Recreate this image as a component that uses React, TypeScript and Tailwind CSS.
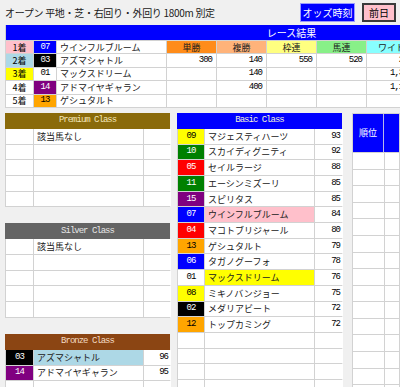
import React from "react";

const jp = "font-['Noto_Sans_CJK_JP',sans-serif]";
const mono = "font-['Liberation_Mono','Noto_Sans_CJK_JP',monospace] tracking-[-1px]";

const frame: Record<string, string> = {
    "01": "bg-white text-black",
    "02": "bg-black text-white",
    "03": "bg-black text-white",
    "04": "bg-[#ff0000] text-white",
    "05": "bg-[#ff0000] text-white",
    "06": "bg-[#0000ff] text-white",
    "07": "bg-[#0000ff] text-white",
    "08": "bg-[#ffff00] text-black",
    "09": "bg-[#ffff00] text-black",
    "10": "bg-[#008000] text-white",
    "11": "bg-[#008000] text-white",
    "12": "bg-[#ffa500] text-black",
    "13": "bg-[#ffa500] text-black",
    "14": "bg-[#800080] text-white",
    "15": "bg-[#800080] text-white",
};

const results = [
    { rank: "1着", rankBg: "bg-[#ffc0cb]", no: "07", name: "ウインフルブルーム" },
    { rank: "2着", rankBg: "bg-[#add8e6]", no: "03", name: "アズマシャトル" },
    { rank: "3着", rankBg: "bg-[#ffff00]", no: "01", name: "マックスドリーム" },
    { rank: "4着", rankBg: "bg-white", no: "14", name: "アドマイヤギャラン" },
    { rank: "5着", rankBg: "bg-white", no: "13", name: "ゲシュタルト" },
];

const payHeads = [
    { label: "単勝", bg: "bg-[#ff8c1a]" },
    { label: "複勝", bg: "bg-[#ffb37a]" },
    { label: "枠連", bg: "bg-[#ffff80]" },
    { label: "馬連", bg: "bg-[#88f088]" },
    { label: "ワイド", bg: "bg-[#88ffff]" },
];

const payouts = [
    ["300", "140", "550", "520", "240"],
    ["", "140", "", "", "1,360"],
    ["", "400", "", "", "1,120"],
    ["", "", "", "", ""],
];

type Horse = { no: string; name: string; score: string; hl?: string };

const basic: Horse[] = [
    { no: "09", name: "マジェスティハーツ", score: "93" },
    { no: "10", name: "スカイディグニティ", score: "92" },
    { no: "05", name: "セイルラージ", score: "88" },
    { no: "11", name: "エーシンミズーリ", score: "85" },
    { no: "15", name: "スピリタス", score: "85" },
    { no: "07", name: "ウインフルブルーム", score: "84", hl: "bg-[#ffc0cb]" },
    { no: "04", name: "マコトブリジャール", score: "80" },
    { no: "13", name: "ゲシュタルト", score: "79" },
    { no: "06", name: "タガノグーフォ", score: "78" },
    { no: "01", name: "マックスドリーム", score: "76", hl: "bg-[#ffff00]" },
    { no: "08", name: "ミキノバンジョー", score: "75" },
    { no: "02", name: "メダリアビート", score: "72" },
    { no: "12", name: "トップカミング", score: "72" },
];

const bronze: Horse[] = [
    { no: "03", name: "アズマシャトル", score: "96", hl: "bg-[#add8e6]" },
    { no: "14", name: "アドマイヤギャラン", score: "95" },
];

function ClassTable({
    title,
    headBg,
    headText,
    rows,
    total,
    cols,
    empty,
}: {
    title: string;
    headBg: string;
    headText: string;
    rows: Horse[];
    total: number;
    cols: string;
    empty?: string;
}) {
    const filled: (Horse | null)[] = [...rows];
    while (filled.length < total) filled.push(null);

    return (
        <div className="flex flex-col">
            <div
                className={`flex h-[16px] items-center justify-center text-[9px] leading-none ${mono} ${headBg} ${headText}`}
            >
                {title}
            </div>
            <div className={`grid ${cols} auto-rows-[14.7px] gap-px border border-t-0 border-[#d2d2d2] bg-[#d2d2d2]`}>
                {filled.map((h, i) => (
                    <React.Fragment key={i}>
                        <div
                            className={`flex items-center justify-center text-[9px] leading-none ${mono} ${
                                h ? frame[h.no] : "bg-white"
                            }`}
                        >
                            {h?.no}
                        </div>
                        <div
                            className={`flex items-center pl-[3px] text-[9px] leading-none text-[#202020] ${jp} ${
                                h?.hl ?? "bg-white"
                            }`}
                        >
                            {h ? h.name : i === 0 ? empty : ""}
                        </div>
                        <div className={`flex items-center justify-end bg-white pr-[3px] text-[9px] leading-none ${mono}`}>
                            {h?.score}
                        </div>
                    </React.Fragment>
                ))}
            </div>
        </div>
    );
}

export default function App() {
    return (
        <div className="h-[387px] w-[400px] overflow-hidden bg-[#f0f0f0] text-black">
            <div className="flex h-[25px] items-center pl-[5px] pr-[4px]">
                <span className={`text-[10px] leading-none tracking-[-0.3px] text-[#202020] ${jp}`}>
                    オープン 平地・芝・右回り・外回り 1800m 別定
                </span>
                <div className="ml-auto flex items-center gap-[7px]">
                    <div
                        className={`flex h-[19px] w-[55px] items-center justify-center border border-[#9a9aff] bg-[#0000ff] text-[10px] leading-none text-white ${jp}`}
                    >
                        オッズ時刻
                    </div>
                    <div
                        className={`flex h-[19px] w-[34px] items-center justify-center border-2 border-[#3a3a3a] bg-[#ffc0cb] text-[10px] leading-none ${jp}`}
                    >
                        前日
                    </div>
                </div>
            </div>

            <div className="ml-[5px] w-[412px] border-x border-b border-[#d2d2d2]">
                <div className="flex h-[15px] bg-[#0000ff]">
                    <div className="w-[161px]" />
                    <div className={`flex flex-1 items-center justify-center text-[10px] leading-none text-white ${jp}`}>
                        レース結果
                    </div>
                </div>
                <div className="grid grid-cols-[27px_22px_109px_49px_49px_49px_49px_49px] auto-rows-[12.4px] gap-px border-t border-[#d2d2d2] bg-[#d2d2d2]">
                    {results.map((r, i) => (
                        <React.Fragment key={r.rank}>
                            <div className={`flex items-center justify-center text-[9px] leading-none ${jp} ${r.rankBg}`}>
                                {r.rank}
                            </div>
                            <div className={`flex items-center justify-center text-[9px] leading-none ${mono} ${frame[r.no]}`}>
                                {r.no}
                            </div>
                            <div className={`flex items-center bg-white pl-[3px] text-[9px] leading-none text-[#202020] ${jp}`}>
                                {r.name}
                            </div>
                            {i === 0
                                ? payHeads.map((p) => (
                                      <div
                                          key={p.label}
                                          className={`flex items-center justify-center text-[9px] leading-none text-[#202020] ${jp} ${p.bg}`}
                                      >
                                          {p.label}
                                      </div>
                                  ))
                                : payouts[i - 1].map((v, j) => (
                                      <div
                                          key={j}
                                          className={`flex items-center justify-end bg-white pr-[4px] text-[9px] leading-none ${mono}`}
                                      >
                                          {v}
                                      </div>
                                  ))}
                        </React.Fragment>
                    ))}
                </div>
            </div>

            <div className="mt-[5px] flex items-start">
                <div className="ml-[5px] flex w-[165px] flex-col">
                    <ClassTable
                        title="Premium Class"
                        headBg="bg-[#8a6a0a]"
                        headText="text-[#f3e6b8]"
                        rows={[]}
                        total={5}
                        cols="grid-cols-[27px_109px_27px]"
                        empty="該当馬なし"
                    />
                    <div className="mt-[16px]">
                        <ClassTable
                            title="Silver Class"
                            headBg="bg-[#646464]"
                            headText="text-[#e6e6e6]"
                            rows={[]}
                            total={5}
                            cols="grid-cols-[27px_109px_27px]"
                            empty="該当馬なし"
                        />
                    </div>
                    <div className="mt-[16px]">
                        <ClassTable
                            title="Bronze Class"
                            headBg="bg-[#8b4513]"
                            headText="text-[#f3dcc4]"
                            rows={bronze}
                            total={3}
                            cols="grid-cols-[27px_109px_27px]"
                        />
                    </div>
                </div>

                <div className="ml-[7px] w-[165px]">
                    <ClassTable
                        title="Basic Class"
                        headBg="bg-[#0000ff]"
                        headText="text-[#f2f2d8]"
                        rows={basic}
                        total={17}
                        cols="grid-cols-[26px_109px_28px]"
                    />
                </div>

                <div className="ml-[10px] w-[70px] border border-[#d2d2d2]">
                    <div className="flex h-[38px] bg-[#0000ff]">
                        <div
                            className={`flex w-[31px] items-center justify-center border-r border-[#b8b8e8] text-[9px] leading-none text-white ${jp}`}
                        >
                            順位
                        </div>
                        <div className="flex-1" />
                    </div>
                    <div className="grid grid-cols-[31px_1fr] auto-rows-[15.6px] gap-px border-t border-[#d2d2d2] bg-[#d2d2d2]">
                        {Array.from({ length: 30 }).map((_, i) => (
                            <div key={i} className="bg-white" />
                        ))}
                    </div>
                </div>
            </div>
        </div>
    );
}
